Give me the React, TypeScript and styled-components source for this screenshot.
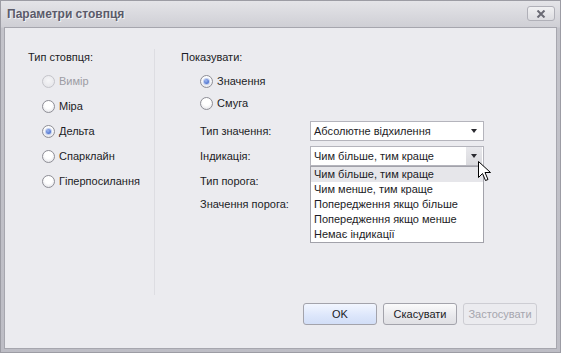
import React from "react";
import styled, { createGlobalStyle, css } from "styled-components";

const GlobalStyle = createGlobalStyle`
  html, body {
    margin: 0;
    padding: 0;
    background: #c9c9d0;
  }
  body {
    font-family: "Liberation Sans", Arial, sans-serif;
    font-size: 11px;
    color: #1c1c26;
  }
`;

const Window = styled.div`
  width: 561px;
  height: 353px;
  box-sizing: border-box;
  border: 1px solid #9c9ca4;
  background: linear-gradient(#e4e4e8, #cfcfd5 26px, #c3c3ca 27px, #bdbdc5);
  display: flex;
  flex-direction: column;
`;

const TitleBar = styled.div`
  height: 26px;
  flex: none;
  display: flex;
  align-items: center;
  justify-content: space-between;
  padding: 0 5px 0 6px;
`;

const Title = styled.span`
  font-weight: bold;
  font-size: 12px;
  color: #5b5b6a;
  text-shadow: 1px 1px 0 rgba(255, 255, 255, 0.7);
`;

const CloseButton = styled.div`
  width: 26px;
  height: 13px;
  margin-top: -1px;
  border: 1px solid #b0b0b8;
  border-radius: 3px;
  background: linear-gradient(#f1f1f3, #dcdce0);
  display: flex;
  align-items: center;
  justify-content: center;
`;

const Body = styled.div`
  flex: 1;
  margin: 0 3px 3px 3px;
  border: 1px solid #a6a6ae;
  background: #ebebef;
  display: flex;
  flex-direction: column;
`;

const Main = styled.div`
  flex: 1;
  display: flex;
  padding-top: 21px;
`;

const LeftColumn = styled.div`
  width: 126px;
  margin-bottom: 8px;
  padding-left: 23px;
  border-right: 1px solid #dddde2;
  display: flex;
  flex-direction: column;
`;

const RightColumn = styled.div`
  flex: 1;
  padding-left: 26px;
  display: flex;
  flex-direction: column;
`;

const GroupLabel = styled.div`
  height: 17px;
  line-height: 17px;
`;

const RadioList = styled.div<{ $gap: number; $indent: number; $top: number }>`
  display: flex;
  flex-direction: column;
  gap: ${(p) => p.$gap}px;
  padding-left: ${(p) => p.$indent}px;
  margin-top: ${(p) => p.$top}px;
`;

const RadioRow = styled.label<{ $disabled?: boolean }>`
  display: flex;
  align-items: center;
  gap: 4px;
  height: 17px;
  line-height: 17px;
  color: ${(p) => (p.$disabled ? "#9c9ca4" : "#1c1c26")};
`;

const RadioCircle = styled.span<{ $checked?: boolean; $disabled?: boolean }>`
  width: 11px;
  height: 11px;
  border-radius: 50%;
  border: 1px solid ${(p) => (p.$disabled ? "#c4c4ca" : "#8e8e96")};
  background: ${(p) =>
    p.$disabled
      ? "radial-gradient(circle at 50% 40%, #f6f6f8, #e2e2e6)"
      : "radial-gradient(circle at 50% 35%, #ffffff 40%, #dcdce2)"};
  display: flex;
  align-items: center;
  justify-content: center;
  flex: none;
  ${(p) =>
    p.$checked &&
    css`
      &::after {
        content: "";
        width: 5px;
        height: 5px;
        border-radius: 50%;
        background: radial-gradient(circle at 40% 35%, #9fb8f0, #2c55c0);
        box-shadow: 0 0 1px 1px rgba(120, 150, 220, 0.5);
      }
    `}
`;

const FieldGrid = styled.div`
  display: grid;
  grid-template-columns: 110px 174px;
  row-gap: 5px;
  margin-top: 9px;
  padding-left: 19px;
  align-items: center;
`;

const FieldLabel = styled.div<{ $shift?: number }>`
  height: 20px;
  line-height: 20px;
  margin-top: ${(p) => p.$shift ?? 0}px;
`;

const Combo = styled.div`
  height: 20px;
  box-sizing: border-box;
  border: 1px solid #b4b4bc;
  background: #ffffff;
  display: flex;
  align-items: center;
  position: relative;
`;

const ComboText = styled.span`
  flex: 1;
  padding-left: 3px;
  line-height: 18px;
  white-space: nowrap;
`;

const ComboButton = styled.span<{ $active?: boolean }>`
  width: 16px;
  height: 18px;
  margin-right: 1px;
  display: flex;
  align-items: center;
  justify-content: center;
  background: ${(p) => (p.$active ? "linear-gradient(#e8e8ec, #dadade)" : "transparent")};
`;

const Arrow = styled.span`
  width: 0;
  height: 0;
  border-left: 3.5px solid transparent;
  border-right: 3.5px solid transparent;
  border-top: 4px solid #2a2a30;
`;

const Popup = styled.div`
  position: absolute;
  left: -1px;
  right: -1px;
  top: 19px;
  z-index: 2;
  border: 1px solid #a2a2aa;
  background: #ffffff;
  display: flex;
  flex-direction: column;
`;

const PopupItem = styled.div<{ $hover?: boolean }>`
  height: 15px;
  line-height: 15px;
  padding-left: 3px;
  white-space: nowrap;
  background: ${(p) => (p.$hover ? "#e6e6ea" : "transparent")};
`;

const Cursor = styled.svg`
  position: absolute;
  left: 167px;
  top: 14px;
  z-index: 3;
`;

const Footer = styled.div`
  flex: none;
  display: flex;
  justify-content: flex-end;
  gap: 6px;
  padding: 0 19px 23px 0;
`;

const Button = styled.div<{ $variant?: "default" | "primary" | "disabled" }>`
  width: 74px;
  height: 22px;
  box-sizing: border-box;
  border-radius: 3px;
  display: flex;
  align-items: center;
  justify-content: center;
  font-size: 11px;
  border: 1px solid
    ${(p) => (p.$variant === "disabled" ? "#cdcdd3" : "#a3a3ab")};
  color: ${(p) => (p.$variant === "disabled" ? "#a6a6ae" : "#1c1c26")};
  background: ${(p) =>
    p.$variant === "primary"
      ? "linear-gradient(#f2f6ff, #dce6fb 60%, #d2def7)"
      : p.$variant === "disabled"
      ? "#ebebef"
      : "linear-gradient(#fafafb, #e8e8ec 60%, #e0e0e4)"};
`;

const columnTypes = [
  { label: "Вимір", disabled: true },
  { label: "Міра" },
  { label: "Дельта", checked: true },
  { label: "Спарклайн" },
  { label: "Гіперпосилання" },
];

const indicationOptions = [
  "Чим більше, тим краще",
  "Чим менше, тим краще",
  "Попередження якщо більше",
  "Попередження якщо менше",
  "Немає індикації",
];

const App = () => {
  return (
    <>
      <GlobalStyle />
      <Window>
        <TitleBar>
          <Title>Параметри стовпця</Title>
          <CloseButton>
            <svg width="10" height="8" viewBox="0 0 10 8">
              <path d="M1.5 0.5 L8.5 7.5 M8.5 0.5 L1.5 7.5" stroke="#6a6a74" strokeWidth="2" />
            </svg>
          </CloseButton>
        </TitleBar>
        <Body>
          <Main>
            <LeftColumn>
              <GroupLabel>Тип стовпця:</GroupLabel>
              <RadioList $gap={8} $indent={14} $top={7}>
                {columnTypes.map((t) => (
                  <RadioRow key={t.label} $disabled={t.disabled}>
                    <RadioCircle $checked={t.checked} $disabled={t.disabled} />
                    {t.label}
                  </RadioRow>
                ))}
              </RadioList>
            </LeftColumn>
            <RightColumn>
              <GroupLabel>Показувати:</GroupLabel>
              <RadioList $gap={5} $indent={19} $top={7}>
                <RadioRow>
                  <RadioCircle $checked />
                  Значення
                </RadioRow>
                <RadioRow>
                  <RadioCircle />
                  Смуга
                </RadioRow>
              </RadioList>
              <FieldGrid>
                <FieldLabel>Тип значення:</FieldLabel>
                <Combo>
                  <ComboText>Абсолютне відхилення</ComboText>
                  <ComboButton>
                    <Arrow />
                  </ComboButton>
                </Combo>
                <FieldLabel>Індикація:</FieldLabel>
                <Combo>
                  <ComboText>Чим більше, тим краще</ComboText>
                  <ComboButton $active>
                    <Arrow />
                  </ComboButton>
                  <Popup>
                    {indicationOptions.map((o, i) => (
                      <PopupItem key={o} $hover={i === 0}>
                        {o}
                      </PopupItem>
                    ))}
                  </Popup>
                  <Cursor width="14" height="22" viewBox="0 0 14 22">
                    <path
                      d="M0.5 0.5 L0.5 16.5 L4.5 12.5 L7.5 19.5 L10 18.5 L7 11.5 L12.5 11.5 Z"
                      fill="#ffffff"
                      stroke="#000000"
                      strokeWidth="1"
                    />
                  </Cursor>
                </Combo>
                <FieldLabel>Тип порога:</FieldLabel>
                <div />
                <FieldLabel $shift={-2}>Значення порога:</FieldLabel>
                <div />
              </FieldGrid>
            </RightColumn>
          </Main>
          <Footer>
            <Button $variant="primary">OK</Button>
            <Button>Скасувати</Button>
            <Button $variant="disabled">Застосувати</Button>
          </Footer>
        </Body>
      </Window>
    </>
  );
};

export default App;
